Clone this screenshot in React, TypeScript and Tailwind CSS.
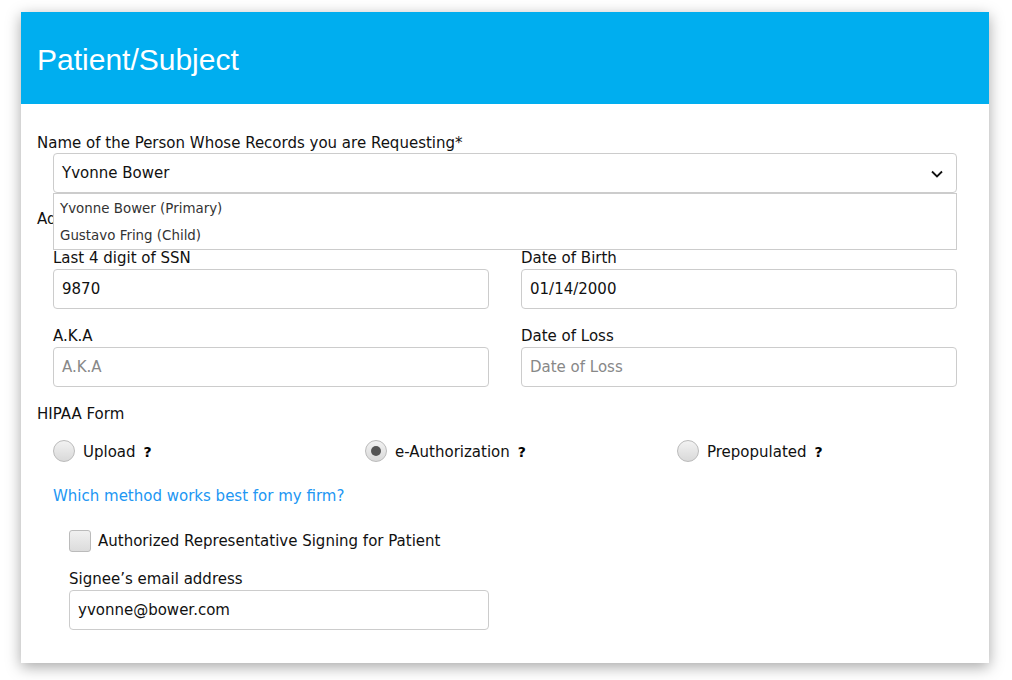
const font = { fontFamily: '"DejaVu Sans", Verdana, sans-serif' };

const Field = ({ label, value, placeholder }: { label: string; value?: string; placeholder?: string }) => (
  <div className="flex flex-col">
    <label className="text-[15px] leading-[20px] text-[#111]">{label}</label>
    <div className="mt-px h-10 rounded border border-[#ccc] px-2 pt-px flex items-center text-[15px]">
      {value ? <span className="text-[#111]">{value}</span> : <span className="text-[#888]">{placeholder}</span>}
    </div>
  </div>
);

const Radio = ({ label, checked }: { label: string; checked?: boolean }) => (
  <div className="w-[312px] h-[22px] shrink-0 flex items-center gap-2">
    <span className="w-[22px] h-[22px] rounded-full border border-[#bbb] bg-gradient-to-b from-[#f2f2f2] to-[#d9d9d9] flex items-center justify-center">
      {checked && <span className="w-[10px] h-[10px] rounded-full bg-[#555]" />}
    </span>
    <span className="text-[15px] leading-[20px] text-[#111] pt-px">{label}</span>
    <span className="text-[14px] leading-[18px] font-bold text-black pt-[2px]">?</span>
  </div>
);

export default function App() {
  return (
    <div className="min-h-[680px] bg-white pt-3 pl-[21px] pr-[23px]" style={font}>
      <div className="bg-white shadow-[0_4px_14px_rgba(0,0,0,0.35)] pb-[33px]">
        {/* header */}
        <div className="h-[92px] bg-[#00aeef] flex items-center px-4">
          <h1 className="text-white text-[30px] leading-none pt-1" style={{ fontFamily: '"Liberation Sans", Arial, sans-serif' }}>
            Patient/Subject
          </h1>
        </div>

        <div className="pl-4 pr-8 pt-7">
          <label className="block text-[15px] leading-[20px] text-[#111] pt-px">Name of the Person Whose Records you are Requesting*</label>
          <div className="relative ml-4">
            <div className="h-10 rounded border border-[#ccc] pl-2 pr-3 pt-px flex items-center justify-between text-[15px] text-[#111]">
              <span>Yvonne Bower</span>
              <svg width="12" height="8" viewBox="0 0 12 8" className="mr-px">
                <polyline points="1,1.5 6,6.5 11,1.5" fill="none" stroke="#111" strokeWidth="1.8" />
              </svg>
            </div>
            <div className="absolute left-0 right-0 top-full z-10 bg-white border border-[#ccc] text-[13.4px] text-[#333]">
              <div className="h-[28px] flex items-center px-[6px] pt-[2px]">Yvonne Bower (Primary)</div>
              <div className="h-[27px] flex items-center px-[6px] pt-[2px]">Gustavo Fring (Child)</div>
            </div>
          </div>

          <div className="mt-4 text-[15px] leading-[20px] text-[#111]">Address</div>

          <div className="ml-4 mt-[19px] grid grid-cols-2 gap-x-8 gap-y-[17px]">
            <Field label="Last 4 digit of SSN" value="9870" />
            <Field label="Date of Birth" value="01/14/2000" />
            <Field label="A.K.A" placeholder="A.K.A" />
            <Field label="Date of Loss" placeholder="Date of Loss" />
          </div>

          <div className="mt-[17px] text-[15px] leading-[20px] text-[#111]">HIPAA Form</div>
          <div className="ml-4 mt-4 flex">
            <Radio label="Upload" />
            <Radio label="e-Authorization" checked />
            <Radio label="Prepopulated" />
          </div>

          <a className="block ml-4 mt-6 text-[15px] leading-[20px] text-[#2196f3]">Which method works best for my firm?</a>

          <div className="ml-8 mt-6 h-[22px] flex items-center gap-[7px]">
            <span className="w-[22px] h-[22px] rounded-[3px] border border-[#bbb] bg-gradient-to-b from-[#f0f0f0] to-[#dcdcdc]" />
            <span className="text-[15px] leading-[20px] text-[#111]">Authorized Representative Signing for Patient</span>
          </div>

          <div className="ml-8 mt-[17px] w-[420px]">
            <Field label="Signee’s email address" value="yvonne@bower.com" />
          </div>
        </div>
      </div>
    </div>
  );
}
